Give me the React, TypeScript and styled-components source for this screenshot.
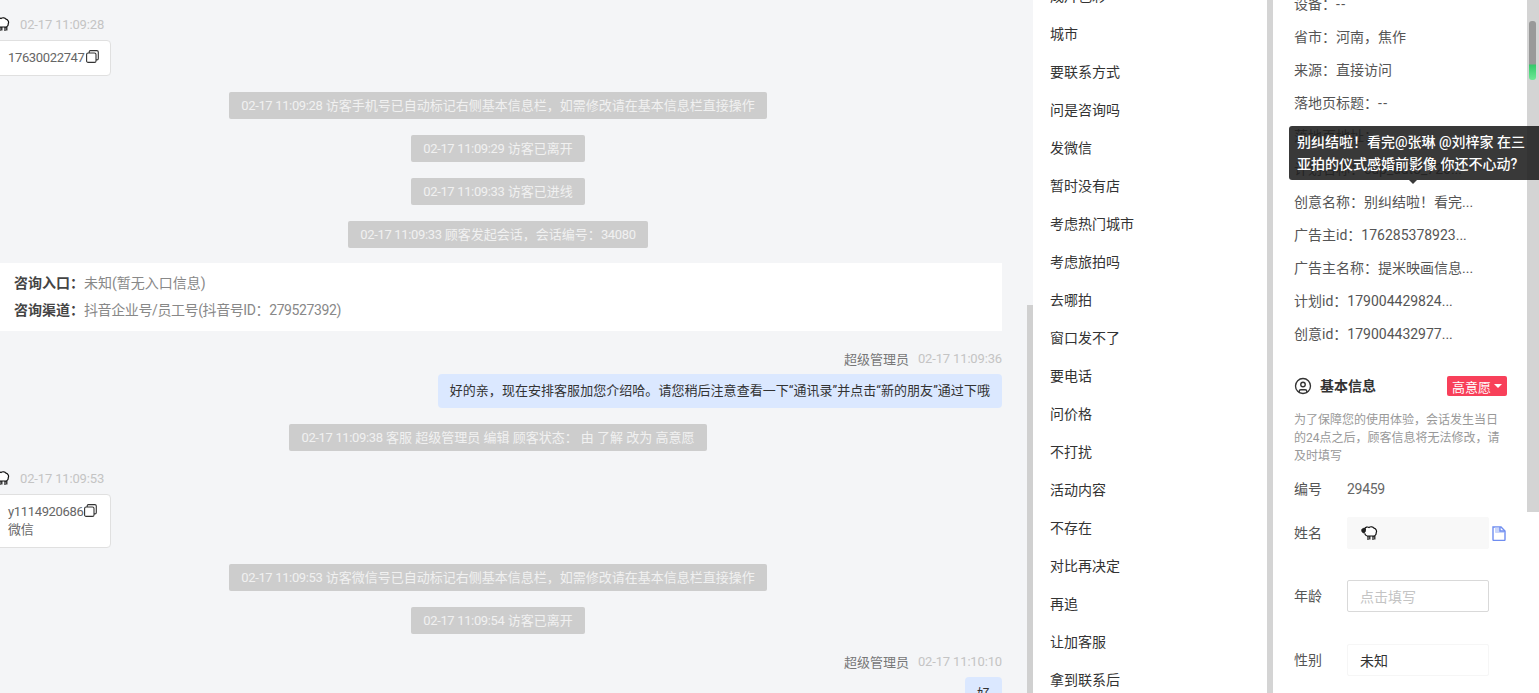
import { CircleUser } from "lucide-react"
import styled, { createGlobalStyle } from "styled-components"

const GlobalStyle = createGlobalStyle`
  html, body {
    margin: 0;
    height: 100%;
    overflow: hidden;
  }
  body {
    font-family: Roboto, "Noto Sans CJK SC", sans-serif;
    font-size: 13px;
    color: #333;
  }
`

const Page = styled.div`
  display: grid;
  grid-template-columns: 1033px 240px 266px;
  height: 693px;
  overflow: hidden;
  background: #d4d4d4;
`

// chat column
const ChatPane = styled.div`
  position: relative;
  overflow: hidden;
  background: #f4f5f7;
`
const ChatScrollThumb = styled.div`
  position: absolute;
  right: 0;
  top: 305px;
  bottom: 0;
  width: 6px;
  background: #d0d0d0;
`
const ChatList = styled.div`
  display: flex;
  flex-direction: column;
  gap: 16px;
  width: 1008px;
  margin-left: -6px;
  padding-top: 13px;
`
const Message = styled.div<{ $mine?: boolean }>`
  display: flex;
  flex-direction: column;
  gap: 7px;
  align-items: ${(p) => (p.$mine ? "flex-end" : "flex-start")};
  margin-top: 2px;
`
const Meta = styled.div`
  display: flex;
  align-items: center;
  gap: 9px;
  height: 18px;
  color: #777;
`
const Time = styled.span`
  color: #c4c4c4;
  letter-spacing: -0.15px;
`
const Card = styled.div`
  width: 92px;
  margin-left: -1px;
  padding: 8px 10px 8px 14px;
  background: #fff;
  border: 1px solid #e0e0e0;
  border-radius: 4px;
  color: #666;
  line-height: 18px;
`
const CardLine = styled.div`
  display: flex;
  align-items: center;
  letter-spacing: -0.35px;
  white-space: nowrap;
`
const CopyIcon = styled.svg`
  flex: none;
  width: 13px;
  height: 13px;
  margin-top: -3px;
  margin-left: 1px;
`
const SystemNote = styled.div`
  align-self: center;
  height: 27px;
  padding: 0 12px;
  border-radius: 2px;
  background: #cdcdcd;
  color: #f1f1f1;
  line-height: 27px;
  white-space: nowrap;
`
const NoteNumber = styled.span`
  letter-spacing: -0.35px;
`
const InfoCard = styled.div`
  margin-top: -1px;
  padding: 7px 0 7px 20px;
  background: #fff;
  font-size: 14px;
  line-height: 27px;
  color: #888;
`
const InfoLabel = styled.b`
  font-weight: 700;
  color: #444;
`
const TightValue = styled.span`
  letter-spacing: -0.4px;
`
const Bubble = styled.div`
  padding: 0 12px;
  height: 34px;
  border-radius: 4px;
  background: #dbe8ff;
  line-height: 34px;
  letter-spacing: 0.04px;
  color: #333;
  white-space: nowrap;
`

// quick replies
const ReplyPane = styled.div`
  overflow: hidden;
  background: #fff;
  border-right: 6px solid #d4d4d4;
`
const ReplyList = styled.div`
  margin-top: -23px;
  padding-left: 17px;
`
const ReplyItem = styled.div`
  height: 38px;
  font-size: 14px;
  line-height: 38px;
  color: #333;
`

// customer info
const InfoPane = styled.div`
  position: relative;
  overflow: hidden;
  background: #fff;
`
const Track = styled.div`
  position: absolute;
  top: 0;
  right: 0;
  width: 12px;
  height: 512px;
  background: #d4d4d4;
`
const Thumb = styled.div`
  position: absolute;
  top: 21px;
  left: 2px;
  width: 7px;
  height: 59px;
  border-radius: 3px;
  background: linear-gradient(#999 0 43px, #35c96a 44px, #6fe896 100%);
`
const InfoBody = styled.div`
  margin-top: -12px;
  padding-left: 21px;
`
const AttrRow = styled.div`
  height: 33px;
  line-height: 33px;
  font-size: 14px;
  color: #555;
  white-space: nowrap;
`
const Dash = styled.span`
  letter-spacing: 1.5px;
`
const Tooltip = styled.div`
  position: absolute;
  left: 16px;
  top: 126px;
  width: 250px;
  height: 54px;
  box-sizing: border-box;
  padding: 5px 0 0 8px;
  border-radius: 3px 0 0 3px;
  background: rgba(30, 30, 30, 0.88);
  color: #fff;
  font-size: 14px;
  font-weight: 500;
  line-height: 22px;
  &::after {
    content: "";
    position: absolute;
    left: 120px;
    top: 54px;
    border: 4px solid transparent;
    border-top-color: rgba(30, 30, 30, 0.88);
    border-bottom: 0;
  }
`
const SectionHead = styled.div`
  display: flex;
  align-items: center;
  height: 20px;
  width: 213px;
  margin-top: 25px;
  color: #333;
`
const SectionTitle = styled.span`
  flex: 1;
  margin-left: 8px;
  margin-top: -2px;
  font-size: 14px;
  font-weight: 700;
`
const Badge = styled.div`
  display: flex;
  align-items: center;
  gap: 3px;
  height: 20px;
  padding: 0 5px;
  border-radius: 2px;
  background: #f8405a;
  color: #fff;
`
const Caret = styled.i`
  border: 4px solid transparent;
  border-top: 4px solid #fff;
  border-bottom: 0;
`
const Notice = styled.div`
  width: 210px;
  margin-top: 15px;
  font-size: 12px;
  line-height: 18px;
  color: #999;
`
const FormRow = styled.div<{ $top: number }>`
  display: flex;
  align-items: center;
  height: 32px;
  margin-top: ${(p) => p.$top}px;
  font-size: 14px;
  color: #555;
`
const FormLabel = styled.div`
  width: 53px;
  flex: none;
  margin-top: -2px;
`
const Field = styled.div<{ $variant?: "filled" | "input" | "plain" }>`
  display: flex;
  align-items: center;
  box-sizing: border-box;
  width: 142px;
  height: 32px;
  margin-right: 3px;
  padding: 0 0 1px 12px;
  border-radius: 2px;
  border: 1px solid
    ${(p) => (p.$variant === "input" ? "#d9d9d9" : p.$variant === "plain" ? "#f6f6f6" : "#f8f8f8")};
  background: ${(p) => (p.$variant === "filled" ? "#f8f8f8" : "#fff")};
  color: ${(p) => (p.$variant === "input" ? "#c4c4c4" : "#333")};
`
const Value = styled.span`
  letter-spacing: -0.3px;
  color: #666;
`
const SheepIcon = styled.svg`
  flex: none;
  width: 18px;
  height: 16px;
`
const LeadSheep = styled(SheepIcon)`
  margin-left: -2px;
  margin-right: 1px;
`

const sheepShape = (
  <>
    <path d="M4.500 4C5.500 2 7.500 1.500 9 2.500 10.500 1.300 13 1.600 14 3.200 16 3.600 17.200 6 16.200 7.800 16.400 10 14.500 11.400 12.500 11H8.500C6.500 11.300 5 10 4.800 8.200" />
    <path d="M5.500 3.800C4.200 3 2.600 3.300 1.800 4.500 1.300 5.800 2.300 7.800 3.600 7.900 4.800 8 5.500 6.500 5.500 5.200z" fill="#222" stroke="#111" strokeWidth="0.800" />
    <path d="M8 11v4M9.800 11v3.500M13 11v4M14.800 11v3.500" strokeWidth="1.200" />
  </>
)

const Sheep = () => (
  <SheepIcon viewBox="0 0 18 16" fill="#fff" stroke="#111" strokeWidth="1.200">
    {sheepShape}
  </SheepIcon>
)

const Lead = () => (
  <LeadSheep viewBox="0 0 18 16" fill="#fff" stroke="#111" strokeWidth="1.200">
    {sheepShape}
  </LeadSheep>
)

const Copy = () => (
  <CopyIcon viewBox="0 0 13 13" fill="none" stroke="#333" strokeWidth="1.100">
    <rect x="0.6" y="3" width="9.400" height="9.400" rx="1.500" />
    <path d="M3.200 3V1.800C3.200 1.100 3.700 0.600 4.400 0.600h6.400c0.900 0 1.500 0.600 1.500 1.500v6.400c0 0.800-0.500 1.400-1.300 1.400H10" />
  </CopyIcon>
)

const DocIcon = () => (
  <svg width="14" height="15" viewBox="0 0 14 15" fill="none" stroke="#6f8df0" strokeWidth="1.400">
    <path d="M1 1h8l4 4v8.500c0 .5-.4 1-1 1H2c-.6 0-1-.5-1-1z" />
    <path d="M3 1.500v4.500c0 .5.300 1 1 1h8v-2H8V1.500z" fill="#c9d5fa" stroke="none" />
    <path d="M8 1v4h5" />
  </svg>
)

const replies = [
  "成片色彩", "城市", "要联系方式", "问是咨询吗", "发微信", "暂时没有店", "考虑热门城市", "考虑旅拍吗",
  "去哪拍", "窗口发不了", "要电话", "问价格", "不打扰", "活动内容", "不存在", "对比再决定", "再追",
  "让加客服", "拿到联系后",
]

const attrs = [
  "设备：--", "省市：河南，焦作", "来源：直接访问", "落地页标题：--", "落地页地址：",
  "计划名称：cup_auto_720...", "创意名称：别纠结啦！看完...", "广告主id：176285378923...",
  "广告主名称：提米映画信息...", "计划id：179004429824...", "创意id：179004432977...",
]

const Note = ({ time, text, num }: { time: string; text: string; num?: string }) => (
  <SystemNote>
    <NoteNumber>{time}</NoteNumber> {text}
    {num && <NoteNumber>{num}</NoteNumber>}
  </SystemNote>
)

const App = () => (
  <Page>
    <GlobalStyle />
    <ChatPane>
      <ChatScrollThumb />
      <ChatList>
        <Message>
          <Meta>
            <Lead />
            <Time>02-17 11:09:28</Time>
          </Meta>
          <Card>
            <CardLine>17630022747<Copy /></CardLine>
          </Card>
        </Message>
        <Note time="02-17 11:09:28" text="访客手机号已自动标记右侧基本信息栏，如需修改请在基本信息栏直接操作" />
        <Note time="02-17 11:09:29" text="访客已离开" />
        <Note time="02-17 11:09:33" text="访客已进线" />
        <Note time="02-17 11:09:33" text="顾客发起会话，会话编号：" num="34080" />
        <InfoCard>
          <div><InfoLabel>咨询入口：</InfoLabel>未知(暂无入口信息)</div>
          <div><InfoLabel>咨询渠道：</InfoLabel><TightValue>抖音企业号/员工号(抖音号ID：279527392)</TightValue></div>
        </InfoCard>
        <Message $mine>
          <Meta>
            超级管理员
            <Time>02-17 11:09:36</Time>
          </Meta>
          <Bubble>好的亲，现在安排客服加您介绍哈。请您稍后注意查看一下“通讯录”并点击“新的朋友”通过下哦</Bubble>
        </Message>
        <Note time="02-17 11:09:38" text="客服 超级管理员 编辑 顾客状态： 由 了解 改为 高意愿" />
        <Message>
          <Meta>
            <Lead />
            <Time>02-17 11:09:53</Time>
          </Meta>
          <Card>
            <CardLine>y1114920686<Copy /></CardLine>
            <CardLine>微信</CardLine>
          </Card>
        </Message>
        <Note time="02-17 11:09:53" text="访客微信号已自动标记右侧基本信息栏，如需修改请在基本信息栏直接操作" />
        <Note time="02-17 11:09:54" text="访客已离开" />
        <Message $mine>
          <Meta>
            超级管理员
            <Time>02-17 11:10:10</Time>
          </Meta>
          <Bubble>好</Bubble>
        </Message>
      </ChatList>
    </ChatPane>

    <ReplyPane>
      <ReplyList>
        {replies.map((r) => (
          <ReplyItem key={r}>{r}</ReplyItem>
        ))}
      </ReplyList>
    </ReplyPane>

    <InfoPane>
      <InfoBody>
        {attrs.map((a) => (
          <AttrRow key={a}>
            {a.endsWith("--") ? <>{a.slice(0, -2)}<Dash>--</Dash></> : a}
          </AttrRow>
        ))}
        <SectionHead>
          <CircleUser size={18} strokeWidth={1.8} />
          <SectionTitle>基本信息</SectionTitle>
          <Badge>高意愿<Caret /></Badge>
        </SectionHead>
        <Notice>为了保障您的使用体验，会话发生当日的24点之后，顾客信息将无法修改，请及时填写</Notice>
        <FormRow $top={8}>
          <FormLabel>编号</FormLabel>
          <Value>29459</Value>
        </FormRow>
        <FormRow $top={12}>
          <FormLabel>姓名</FormLabel>
          <Field $variant="filled"><Sheep /></Field>
          <DocIcon />
        </FormRow>
        <FormRow $top={31}>
          <FormLabel>年龄</FormLabel>
          <Field $variant="input">点击填写</Field>
        </FormRow>
        <FormRow $top={32}>
          <FormLabel>性别</FormLabel>
          <Field $variant="plain">未知</Field>
        </FormRow>
      </InfoBody>
      <Track>
        <Thumb />
      </Track>
      <Tooltip>别纠结啦！看完@张琳 @刘梓家 在三亚拍的仪式感婚前影像 你还不心动?</Tooltip>
    </InfoPane>
  </Page>
)

export default App
